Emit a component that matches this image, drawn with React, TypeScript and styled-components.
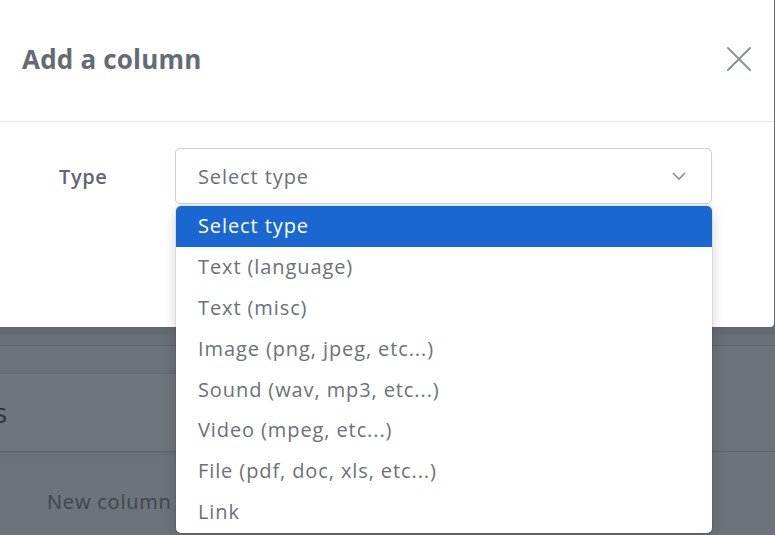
import styled, { createGlobalStyle } from "styled-components";

const GlobalStyle = createGlobalStyle`
  html, body {
    margin: 0;
    padding: 0;
  }
  body {
    font-family: "Open Sans", Lato, "Liberation Sans", sans-serif;
    background: #d8e6f6;
    overflow: hidden;
  }
`;

const Screen = styled.div`
  position: relative;
  width: 775px;
  height: 535px;
  overflow: hidden;
`;

/* page behind the modal */
const Page = styled.div`
  display: flex;
  flex-direction: column;
`;

const PageTop = styled.div`
  height: 335px;
  background: #c9d5e3;
  flex-shrink: 0;
`;

const PageNav = styled.div`
  height: 10px;
  background: #d4e0ee;
  border-bottom: 1px solid #c3cfdd;
`;

const PageSection = styled.div`
  padding-top: 28px;
`;

const Card = styled.div`
  width: 730px;
  height: 77px;
  background: #dce8f6;
  display: flex;
  align-items: center;
  font-size: 27px;
  color: #5c6877;
  margin-left: -112px;
  padding-left: 8px;
  box-sizing: border-box;
  box-shadow: 2px 0 6px rgba(40, 60, 90, 0.15);
`;

const Divider = styled.div`
  height: 1px;
  background: #bcc7d4;
`;

const ListRow = styled.div`
  height: 98px;
  flex-shrink: 0;
  display: flex;
  align-items: center;
  padding-left: 47px;
  font-size: 20px;
  letter-spacing: 0.8px;
  color: #808c99;
`;

const Backdrop = styled.div`
  position: absolute;
  inset: 0;
  background: rgba(0, 0, 0, 0.5);
`;

const Modal = styled.div`
  position: absolute;
  top: 0;
  left: 0;
  width: 774px;
  height: 327px;
  background: #fff;
  border-bottom-right-radius: 4px;
  display: flex;
  flex-direction: column;
`;

const ModalHeader = styled.header`
  height: 122px;
  box-sizing: border-box;
  border-bottom: 1px solid #e3e5e8;
  display: flex;
  align-items: center;
  justify-content: space-between;
  padding: 0 22px 4px 22px;
`;

const Title = styled.h1`
  margin: 0;
  font-size: 26px;
  font-weight: 700;
  color: #646b73;
  letter-spacing: 0.2px;
`;

const CloseButton = styled.button`
  display: flex;
  align-items: center;
  justify-content: center;
  background: transparent;
  border: none;
  padding: 0;
  width: 26px;
  height: 26px;
  cursor: pointer;
`;

const ModalBody = styled.div`
  padding: 26px 0 0 59px;
  display: flex;
  flex-direction: column;
`;

const FieldRow = styled.div`
  display: flex;
  align-items: center;
`;

const Label = styled.label`
  width: 116px;
  font-size: 20px;
  font-weight: 600;
  letter-spacing: 0.6px;
  color: #5f666e;
`;

const SelectWrap = styled.div`
  position: relative;
  width: 537px;
`;

const SelectBox = styled.div`
  height: 56px;
  box-sizing: border-box;
  border: 1px solid #cfd2d6;
  border-radius: 5px;
  display: flex;
  align-items: center;
  justify-content: space-between;
  padding: 0 24px 0 22px;
  font-size: 20px;
  letter-spacing: 0.9px;
  color: #6b7178;
  background: #fff;
  box-shadow: 0 2px 3px rgba(0, 0, 0, 0.04);
`;

const HiddenInput = styled.div`
  margin-left: 116px;
  margin-top: 44px;
  width: 537px;
  height: 52px;
  box-sizing: border-box;
  border-right: 2px solid #7a8088;
`;

const Dropdown = styled.ul`
  position: absolute;
  top: 58px;
  left: 1px;
  width: 536px;
  margin: 0;
  padding: 0;
  list-style: none;
  background: #fff;
  border-radius: 5px;
  overflow: hidden;
  box-shadow: 0 4px 14px rgba(0, 0, 0, 0.18), 0 0 0 1px rgba(0, 0, 0, 0.06);
  z-index: 2;
`;

const Option = styled.li<{ $active?: boolean }>`
  height: 40.9px;
  line-height: 40.9px;
  padding-left: 22px;
  font-size: 20px;
  letter-spacing: 0.9px;
  color: ${({ $active }) => ($active ? "#ffffff" : "#6b7178")};
  background: ${({ $active }) => ($active ? "#1a67d2" : "transparent")};
`;

const options = [
  "Select type",
  "Text (language)",
  "Text (misc)",
  "Image (png, jpeg, etc...)",
  "Sound (wav, mp3, etc...)",
  "Video (mpeg, etc...)",
  "File (pdf, doc, xls, etc...)",
  "Link",
];

export default function App() {
  return (
    <Screen>
      <GlobalStyle />
      <Page>
        <PageTop />
        <PageNav />
        <PageSection>
          <Card>Columns</Card>
        </PageSection>
        <Divider />
        <ListRow>New column</ListRow>
      </Page>
      <Backdrop />
      <Modal>
        <ModalHeader>
          <Title>Add a column</Title>
          <CloseButton aria-label="Close">
            <svg width="26" height="26" viewBox="0 0 26 26">
              <path
                d="M2 2 L24 24 M24 2 L2 24"
                stroke="#8a9199"
                strokeWidth="2"
                strokeLinecap="round"
              />
            </svg>
          </CloseButton>
        </ModalHeader>
        <ModalBody>
          <FieldRow>
            <Label>Type</Label>
            <SelectWrap>
              <SelectBox>
                <span>Select type</span>
                <svg width="16" height="10" viewBox="0 0 16 10">
                  <path
                    d="M2 2 L8 8 L14 2"
                    fill="none"
                    stroke="#8a9199"
                    strokeWidth="1.6"
                  />
                </svg>
              </SelectBox>
              <Dropdown>
                {options.map((o, i) => (
                  <Option key={o} $active={i === 0}>
                    {o}
                  </Option>
                ))}
              </Dropdown>
            </SelectWrap>
          </FieldRow>
          <HiddenInput />
        </ModalBody>
      </Modal>
    </Screen>
  );
}
